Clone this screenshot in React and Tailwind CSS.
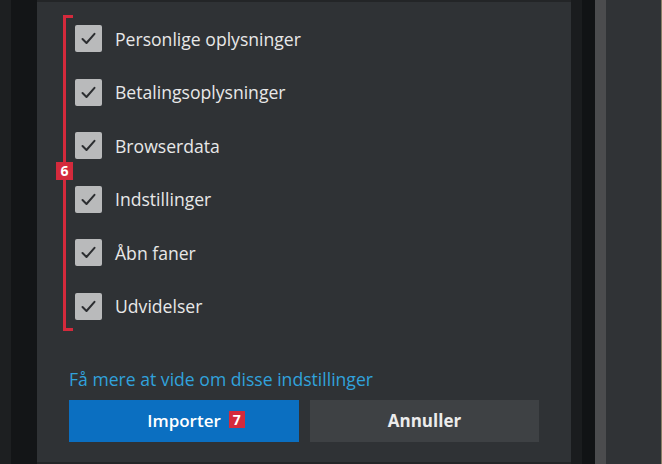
import React from "react";

const items = [
  "Personlige oplysninger",
  "Betalingsoplysninger",
  "Browserdata",
  "Indstillinger",
  "Åbn faner",
  "Udvidelser",
];

const Check = () => (
  <div className="flex h-[27px] w-[27px] shrink-0 items-center justify-center rounded-[2px] bg-[#b9babb]">
    <svg width="19" height="19" viewBox="0 0 19 19" fill="none">
      <path d="M3.5 10 L7.5 14 L15.5 4.8" stroke="#2c2e31" strokeWidth="2" strokeLinecap="round" strokeLinejoin="round" />
    </svg>
  </div>
);

const App = () => {
  return (
    <div
      className="flex h-[464px] w-[662px] overflow-hidden bg-[#2f3235]"
      style={{ fontFamily: '"Open Sans", "Noto Sans", sans-serif' }}
    >
      <div className="flex w-[37px] shrink-0">
        <div className="w-[11px] bg-[#1d1f21]" />
        <div className="flex-1 bg-[#131517]" />
      </div>

      <div className="flex w-[534px] shrink-0 flex-col border-t-2 border-b-2 border-[#232527] bg-[#2f3235] pl-[26px] pt-[13px]">
        <div className="relative flex">
          <div className="w-[10px] shrink-0 border-y-[3px] border-l-[3px] border-[#d42a3c]" />
          <div className="absolute left-[-7px] top-[147px] flex h-[18px] w-[17px] items-center justify-center bg-[#d42a3c] text-[14px] font-bold leading-none text-white">
            6
          </div>
          <div className="ml-[2px] flex flex-col gap-[26.6px] pb-[11px] pt-[10px]">
            {items.map((label) => (
              <div key={label} className="flex items-center gap-[13px]">
                <Check />
                <span className="text-[17.6px] leading-[20px] text-[#e8e8e8]">{label}</span>
              </div>
            ))}
          </div>
        </div>

        <a className="mt-[38px] ml-[6px] text-[17.6px] leading-[20px] text-[#31a2dc]">
          Få mere at vide om disse indstillinger
        </a>

        <div className="mt-[11px] ml-[6px] flex gap-[11px]">
          <button className="flex h-[42px] w-[230px] items-center justify-center bg-[#0b6fc1] text-[17px] font-semibold text-white">
            <span className="relative">
              Importer
              <span className="absolute left-[calc(100%+8px)] top-[3px] flex h-[17px] w-[16px] items-center justify-center bg-[#d42a3c] text-[14px] font-bold leading-none text-white">
                7
              </span>
            </span>
          </button>
          <button className="flex h-[42px] w-[229px] items-center justify-center bg-[#3e4144] text-[17px] font-bold text-[#ececec]">
            Annuller
          </button>
        </div>
      </div>

      <div className="w-[11px] shrink-0 bg-[#1a1c1e]" />
      <div className="w-[13px] shrink-0 bg-[#111315]" />
      <div className="w-[11px] shrink-0 bg-[#4b4c4e]" />
      <div className="flex-1 border-r border-[#8a7f66] bg-[#303336]" />
    </div>
  );
};

export default App;
